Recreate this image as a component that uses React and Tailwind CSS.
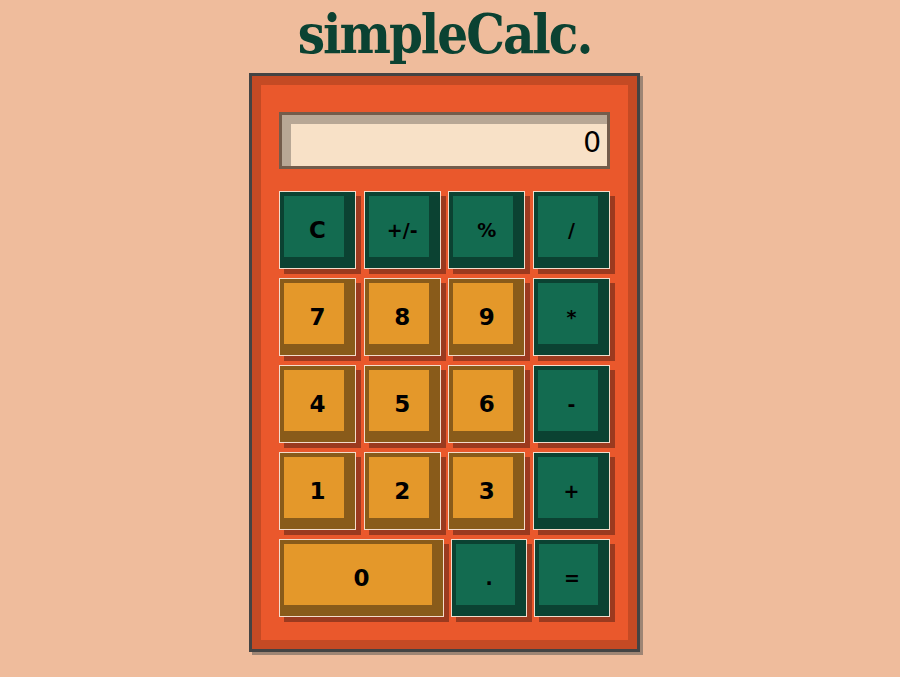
import React from "react";

const G = "bg-[#136b50] shadow-[inset_4px_4px_0_#0b4232,inset_-11px_-11px_0_#0b4232,5px_5px_0_#9b3a1f]";
const O = "bg-[#e4982a] shadow-[inset_4px_4px_0_#895b1a,inset_-11px_-11px_0_#895b1a,5px_5px_0_#9b3a1f]";

function Key({ label, kind, w = "w-[77px]" }) {
  const big = /^[0-9C]$/.test(label);
  return (
    <div
      className={`${w} h-[78px] border border-[#f3dccb] flex items-center justify-center font-bold text-black ${big ? "text-[23px]" : "text-[19px]"} ${kind === "g" ? G : O}`}
    >
      {label}
    </div>
  );
}

export default function App() {
  const rows = [
    [["C", "g"], ["+/-", "g"], ["%", "g"], ["/", "g"]],
    [["7", "o"], ["8", "o"], ["9", "o"], ["*", "g"]],
    [["4", "o"], ["5", "o"], ["6", "o"], ["-", "g"]],
    [["1", "o"], ["2", "o"], ["3", "o"], ["+", "g"]],
  ];
  return (
    <div className="min-h-screen bg-[#efbc9c] flex flex-col items-center pr-[11px] font-['DejaVu_Sans',sans-serif]">
      <h1 className="mt-[6px] mb-[11px] h-[56px] text-[54px] leading-[56px] tracking-[-2px] font-bold text-[#0b4232] font-['DejaVu_Serif',serif] [font-stretch:condensed]">
        simpleCalc.
      </h1>
      <div className="w-[391px] border-[3px] border-[#434343] bg-[#c44a24] p-[9px] shadow-[3px_3px_0_#9e8574]">
        <div className="bg-[#ea582c] pt-[27px] px-[18px] pb-[23px]">
          <div className="h-[57px] border-[3px] border-[#735c4b] bg-[#f8e1c7] shadow-[inset_9px_9px_0_#b8a795] flex items-center justify-end pr-[6px] pt-[4px] text-[28px] text-black">
            0
          </div>
          <div className="mt-[22px] flex flex-col gap-[9px]">
            {rows.map((r, i) => (
              <div key={i} className="flex justify-between">
                {r.map(([l, k]) => (
                  <Key key={l} label={l} kind={k} />
                ))}
              </div>
            ))}
            <div className="flex justify-between">
              <Key label="0" kind="o" w="w-[165px]" />
              <Key label="." kind="g" w="w-[76px]" />
              <Key label="=" kind="g" w="w-[76px]" />
            </div>
          </div>
        </div>
      </div>
    </div>
  );
}
